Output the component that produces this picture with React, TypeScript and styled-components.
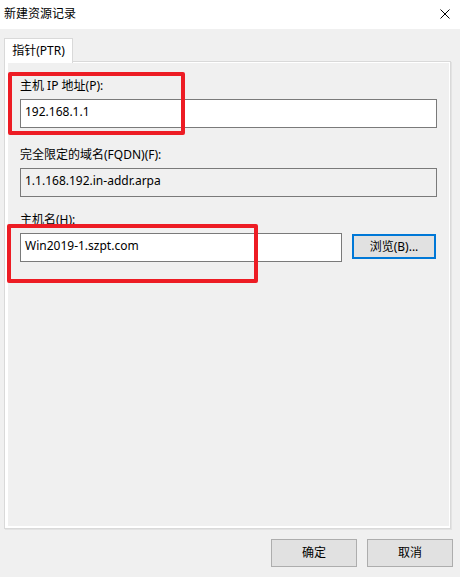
import styled, { createGlobalStyle } from 'styled-components';

const GlobalStyle = createGlobalStyle`
  html, body {
    margin: 0;
    padding: 0;
    background: #f0f0f0;
  }
  body {
    font-family: "Noto Sans", "Noto Sans CJK SC", sans-serif;
    font-size: 12px;
    color: #000;
  }
`;

const Window = styled.div`
  width: 460px;
  height: 577px;
  display: flex;
  flex-direction: column;
  background: #f0f0f0;
  overflow: hidden;
`;

const TitleBar = styled.div`
  height: 29px;
  flex: none;
  display: flex;
  align-items: center;
  justify-content: space-between;
  padding: 0 10px 0 4px;
  background: #fff;
`;

const Title = styled.span`
  font-size: 12px;
  line-height: 16px;
  margin-top: -2px;
`;

const CloseButton = styled.button`
  width: 10px;
  height: 10px;
  padding: 0;
  border: 0;
  background: none;
  display: flex;
  margin-top: -2px;
`;

const Body = styled.div`
  flex: 1;
  display: flex;
  flex-direction: column;
  padding: 9px 9px 0 4px;
`;

const TabStrip = styled.div`
  display: flex;
  height: 24px;
  position: relative;
  z-index: 1;
  margin-bottom: -1px;
`;

const Tab = styled.div`
  width: 69px;
  height: 25px;
  box-sizing: border-box;
  background: #fff;
  border: 1px solid #d9d9d9;
  border-bottom: 0;
  display: flex;
  align-items: center;
  justify-content: center;
  font-size: 12px;
  line-height: 16px;
  padding-bottom: 1px;
`;

const Panel = styled.div`
  position: relative;
  width: 447px;
  height: 468px;
  box-sizing: border-box;
  border: 1px solid #d9d9d9;
  box-shadow: inset 3px 1px 0 #fff, inset -1px -2px 0 #fff, 1px 1px 0 #e3e3e3;
  padding: 16px 13px 0 15px;
  display: flex;
  flex-direction: column;
`;

const Field = styled.div<{ $top: number }>`
  display: flex;
  flex-direction: column;
  gap: 5px;
  margin-top: ${(p) => p.$top}px;
`;

const Label = styled.label`
  font-size: 12px;
  line-height: 16px;
  white-space: nowrap;
`;

const Row = styled.div`
  display: flex;
  align-items: flex-start;
  gap: 10px;
`;

const TextBox = styled.div<{ $readOnly?: boolean; $width?: number }>`
  box-sizing: border-box;
  height: 29px;
  width: ${(p) => (p.$width ? `${p.$width}px` : '100%')};
  flex: none;
  border: 1px solid #7a7a7a;
  background: ${(p) => (p.$readOnly ? '#f0f0f0' : '#fff')};
  padding: 4px 4px 0 4px;
  font-size: 12px;
  line-height: 16px;
  white-space: nowrap;
`;

const BrowseButton = styled.button`
  box-sizing: border-box;
  width: 84px;
  height: 25px;
  margin-top: 1px;
  border: 2px solid #0078d7;
  background: #e1e1e1;
  font-family: inherit;
  font-size: 12px;
  line-height: 16px;
  color: #000;
  padding: 0;
`;

const Annotation = styled.div<{ $left: number; $top: number; $width: number; $height: number }>`
  position: absolute;
  left: ${(p) => p.$left}px;
  top: ${(p) => p.$top}px;
  width: ${(p) => p.$width}px;
  height: ${(p) => p.$height}px;
  box-sizing: border-box;
  border: 4px solid #ed1c24;
  border-radius: 2px;
  pointer-events: none;
`;

const Footer = styled.div`
  display: flex;
  justify-content: flex-end;
  gap: 10px;
  padding: 10px 7px 0 0;
  margin-right: -9px;
`;

const DialogButton = styled.button`
  box-sizing: border-box;
  width: 86px;
  height: 28px;
  border: 1px solid #adadad;
  background: #e1e1e1;
  font-family: inherit;
  font-size: 12px;
  line-height: 16px;
  color: #000;
  padding: 0;
`;

export default function App() {
  return (
    <>
      <GlobalStyle />
      <Window>
        <TitleBar>
          <Title>新建资源记录</Title>
          <CloseButton aria-label="关闭">
            <svg width="10" height="10" viewBox="0 0 10 10">
              <path d="M0.5 0.5 L9.5 9.5 M9.5 0.5 L0.5 9.5" stroke="#000" strokeWidth="1" fill="none" />
            </svg>
          </CloseButton>
        </TitleBar>
        <Body>
          <TabStrip>
            <Tab>指针(PTR)</Tab>
          </TabStrip>
          <Panel>
            <Field $top={0}>
              <Label>主机 IP 地址(P):</Label>
              <TextBox>192.168.1.1</TextBox>
            </Field>
            <Field $top={19}>
              <Label>完全限定的域名(FQDN)(F):</Label>
              <TextBox $readOnly>1.1.168.192.in-addr.arpa</TextBox>
            </Field>
            <Field $top={15}>
              <Label>主机名(H):</Label>
              <Row>
                <TextBox $width={322}>Win2019-1.szpt.com</TextBox>
                <BrowseButton>浏览(B)...</BrowseButton>
              </Row>
            </Field>
            <Annotation $left={3} $top={10} $width={177} $height={63} />
            <Annotation $left={2} $top={162} $width={251} $height={59} />
          </Panel>
          <Footer>
            <DialogButton>确定</DialogButton>
            <DialogButton>取消</DialogButton>
          </Footer>
        </Body>
      </Window>
    </>
  );
}
